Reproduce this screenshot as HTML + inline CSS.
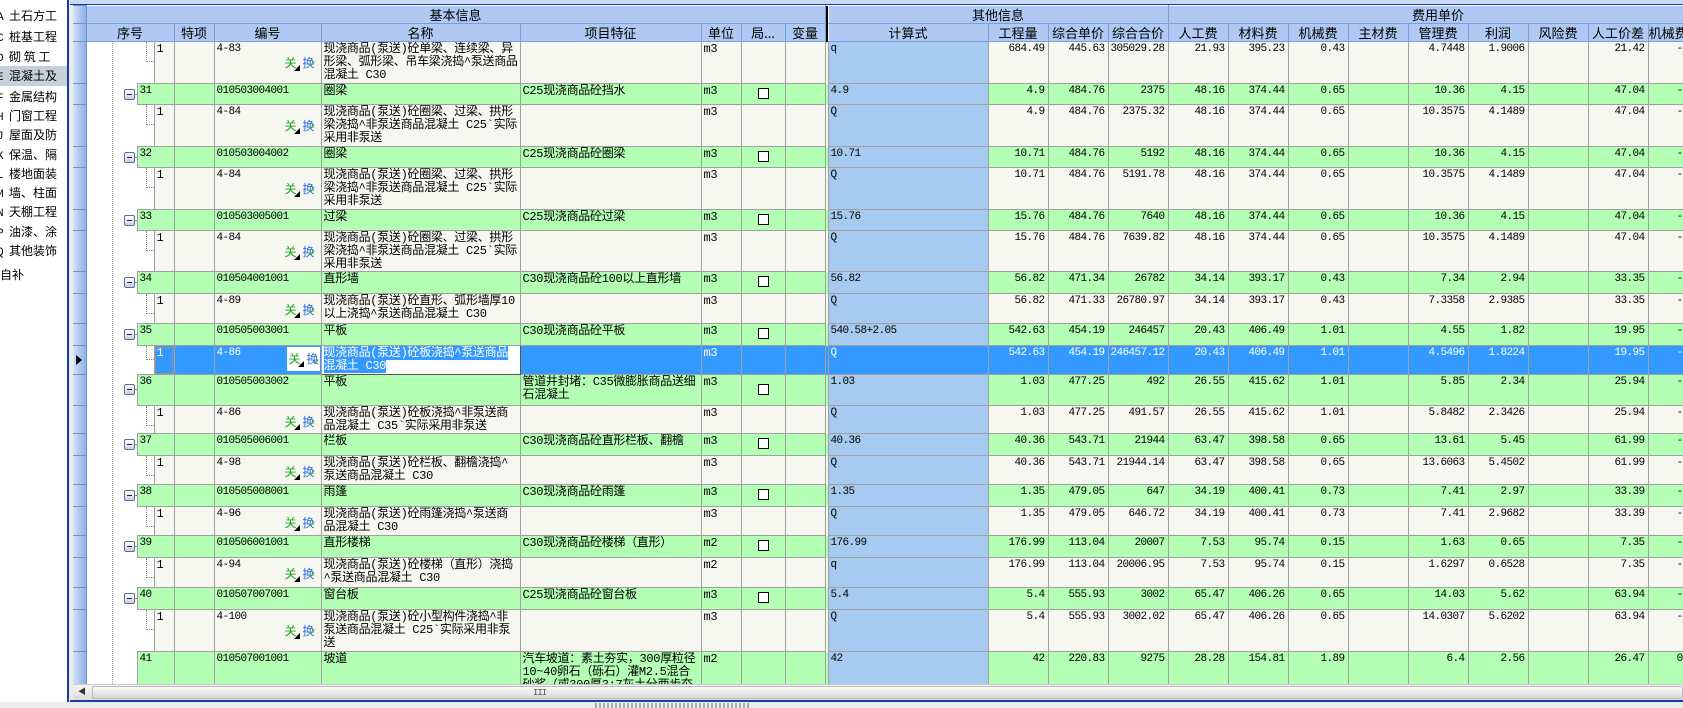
<!DOCTYPE html>
<html><head><meta charset="utf-8"><style>
*{box-sizing:border-box;margin:0;padding:0}
body{width:1683px;height:708px;overflow:hidden;background:#ececec;font:12px "Liberation Mono","WenQuanYi Zen Hei","Noto Sans CJK SC",monospace;color:#000;position:relative}
#left{position:absolute;left:0;top:0;width:69px;height:702px;background:#fff;border-right:2px solid #1a3c9e;overflow:hidden}
#left div{position:absolute;left:-3px;width:72px;height:19px;line-height:19px;font-size:12px;white-space:nowrap;font-family:"WenQuanYi Zen Hei","Noto Sans CJK SC",sans-serif}
#left div b{display:inline-block;width:12px;font-weight:normal;font-family:"Liberation Mono",monospace;font-size:11px}
#topbar{position:absolute;left:70px;top:0;width:1613px;height:5px;background:#c9dbf5;border-bottom:1px solid #1a3c9e}
#grid{position:absolute;left:73px;top:5px;width:1610px;height:679px;overflow:hidden;background:#fff}
table{border-collapse:collapse;table-layout:fixed;width:1635px}
td{border:1px solid #a0a0a0;padding:1px 1px 0 2px;vertical-align:top;overflow:hidden;line-height:13px;white-space:normal;word-break:break-all;letter-spacing:-0.3px}
thead td{background:#afc9f2;border:1px solid #fff;border-right:1px solid #7c9ddb;border-bottom:1px solid #7c9ddb;text-align:center;vertical-align:middle;font-family:"WenQuanYi Zen Hei","Noto Sans CJK SC",sans-serif;font-size:13px;padding:0;white-space:nowrap;letter-spacing:0}
td.rh{background:linear-gradient(90deg,#d6e4fa,#a9c3ee 60%,#8fb0e6);border:1px solid #6f91d4;border-left:0;padding:0;position:relative}
td.tk{background:#000;border:0;padding:0}
td.tr{border:0;background:#fff;position:relative;padding:0}
tr.g td{background:#b3ffb3}
tr.s td{background:#f7f7f2}
tr.g td.tr,tr.s td.tr{background:#fff}
td.c{background:#a6caf0!important;font-size:11px;letter-spacing:-0.6px}
td.r{text-align:right;padding-right:3px;font-size:11px;letter-spacing:-0.6px;white-space:nowrap}
td.l{padding-left:28px;font-size:11px;letter-spacing:-0.6px;white-space:nowrap}
td.n{font-size:11px;letter-spacing:-0.6px}
tr.sel td{background:#3399ff!important;color:#fff}
tr.sel td.tr{background:#fff!important}
tr.g td.rh,tr.s td.rh,tr.sel td.rh{background:linear-gradient(90deg,#d6e4fa,#a9c3ee 60%,#8fb0e6)!important}
.mb{position:absolute;left:37px;width:11px;height:11px;border:1px solid #5d6f8e;background:linear-gradient(#fff,#c7d2e4);border-radius:2px}
.mb:after{content:"";position:absolute;left:2px;top:4px;width:5px;height:1px;background:#223}
.ml{position:absolute;left:48px;width:4px;border-top:1px dotted #888}
.el{position:absolute;left:59px;top:0;width:8px;height:20px;border-left:1px dotted #888;border-bottom:1px dotted #888}
.ic{position:absolute;right:6px;font-family:"WenQuanYi Zen Hei","Noto Sans CJK SC",sans-serif;font-size:12px;line-height:13px;letter-spacing:0}
.ic i{font-style:normal;color:#1aa51a;position:relative;margin-right:6px}
.ic i:after{content:"";position:absolute;right:-4px;bottom:0;border:3px solid transparent;border-right-color:#000;border-bottom-color:#000}
.ic u{text-decoration:none;color:#2b6de0;position:relative}
.ic u:after{content:"✔";position:absolute;left:6px;top:3px;font-size:9px;color:#3bb33b}
td.bn{position:relative}
.cb{display:block;margin:3px auto 0;width:11px;height:11px;border:1px solid #000;background:#fff}
#vdot{position:absolute;left:112px;top:41px;height:643px;border-left:1px dotted #999}
#hs{position:absolute;left:73px;top:684px;width:1610px;height:16px;background:linear-gradient(#f4f4f4,#dcdcdc);border-top:1px solid #c8c8c8}
#hs .a{position:absolute;left:2px;top:2px;width:14px;height:12px;font-size:8px;line-height:12px;text-align:center;color:#333}
#hs .t{position:absolute;left:19px;top:1px;width:1591px;height:13px;background:linear-gradient(#fafafa,#d8d8d8);border:1px solid #bcbcbc;border-radius:2px}
#hs .t span{position:absolute;left:440px;top:1px;font-size:9px;color:#555;letter-spacing:-1px}
#bl{position:absolute;left:70px;top:700px;width:1613px;height:2px;background:#1a3c9e}
#dots{position:absolute;left:595px;top:703px;width:155px;height:5px;background:repeating-linear-gradient(90deg,#aaa 0 2px,transparent 2px 4px)}
</style></head><body>
<div id="left">
<div style="top:6px"><b>A</b>土石方工</div>
<div style="top:27px"><b>C</b>桩基工程</div>
<div style="top:47px"><b>D</b>砌 筑 工</div>
<div style="top:66px;background:#c6d0dc;height:20px"><b>E</b>混凝土及</div>
<div style="top:87px"><b>F</b>金属结构</div>
<div style="top:106px"><b>H</b>门窗工程</div>
<div style="top:125px"><b>J</b>屋面及防</div>
<div style="top:145px"><b>K</b>保温、隔</div>
<div style="top:164px"><b>L</b>楼地面装</div>
<div style="top:183px"><b>M</b>墙、柱面</div>
<div style="top:202px"><b>N</b>天棚工程</div>
<div style="top:222px"><b>P</b>油漆、涂</div>
<div style="top:241px"><b>Q</b>其他装饰</div>
<div style="top:265px;left:0">自补</div>
</div>
<div id="topbar"></div>
<div id="grid">
<table>
<colgroup><col style="width:13px"><col style="width:51px"><col style="width:17px"><col style="width:20px"><col style="width:40px"><col style="width:107px"><col style="width:199px"><col style="width:181px"><col style="width:40px"><col style="width:44px"><col style="width:40px"><col style="width:3px"><col style="width:160px"><col style="width:60px"><col style="width:60px"><col style="width:60px"><col style="width:60px"><col style="width:60px"><col style="width:60px"><col style="width:60px"><col style="width:60px"><col style="width:60px"><col style="width:60px"><col style="width:60px"><col style="width:60px"></colgroup>
<thead>
<tr style="height:18px"><td class="rh"></td><td colspan="10">基本信息</td><td class="tk"></td><td colspan="4">其他信息</td><td colspan="9">费用单价</td></tr>
<tr style="height:18px"><td class="rh"></td><td colspan="3">序号</td><td>特项</td><td>编号</td><td>名称</td><td>项目特征</td><td>单位</td><td>局...</td><td>变量</td><td class="tk"></td><td>计算式</td><td>工程量</td><td>综合单价</td><td>综合合价</td><td>人工费</td><td>材料费</td><td>机械费</td><td>主材费</td><td>管理费</td><td>利润</td><td>风险费</td><td>人工价差</td><td style="text-align:left">机械费</td></tr>
</thead>
<tbody>
<tr class="s" style="height:42px"><td class="rh"></td><td class="tr" colspan="2"><div class="el"></div></td><td>1</td><td></td><td class="bn n">4-83<span class="ic" style="top:14px"><i>关</i><u>换</u></span></td><td>现浇商品(泵送)砼单梁、连续梁、异形梁、弧形梁、吊车梁浇捣^泵送商品混凝土 C30</td><td></td><td>m3</td><td></td><td></td><td class="tk"></td><td class="c">q</td><td class="r">684.49</td><td class="r">445.63</td><td class="r">305029.28</td><td class="r">21.93</td><td class="r">395.23</td><td class="r">0.43</td><td></td><td class="r">4.7448</td><td class="r">1.9006</td><td></td><td class="r">21.42</td><td class="l">-0</td></tr>
<tr class="g" style="height:21px"><td class="rh"></td><td class="tr"><div class="mb" style="top:5px"></div><div class="ml" style="top:10px"></div></td><td colspan="2" class="n">31</td><td></td><td class="n">010503004001</td><td>圈梁</td><td>C25现浇商品砼挡水</td><td>m3</td><td><span class="cb"></span></td><td></td><td class="tk"></td><td class="c">4.9</td><td class="r">4.9</td><td class="r">484.76</td><td class="r">2375</td><td class="r">48.16</td><td class="r">374.44</td><td class="r">0.65</td><td></td><td class="r">10.36</td><td class="r">4.15</td><td></td><td class="r">47.04</td><td class="l">-0</td></tr>
<tr class="s" style="height:42px"><td class="rh"></td><td class="tr" colspan="2"><div class="el"></div></td><td>1</td><td></td><td class="bn n">4-84<span class="ic" style="top:14px"><i>关</i><u>换</u></span></td><td>现浇商品(泵送)砼圈梁、过梁、拱形梁浇捣^非泵送商品混凝土 C25`实际采用非泵送</td><td></td><td>m3</td><td></td><td></td><td class="tk"></td><td class="c">Q</td><td class="r">4.9</td><td class="r">484.76</td><td class="r">2375.32</td><td class="r">48.16</td><td class="r">374.44</td><td class="r">0.65</td><td></td><td class="r">10.3575</td><td class="r">4.1489</td><td></td><td class="r">47.04</td><td class="l">-0</td></tr>
<tr class="g" style="height:21px"><td class="rh"></td><td class="tr"><div class="mb" style="top:5px"></div><div class="ml" style="top:10px"></div></td><td colspan="2" class="n">32</td><td></td><td class="n">010503004002</td><td>圈梁</td><td>C25现浇商品砼圈梁</td><td>m3</td><td><span class="cb"></span></td><td></td><td class="tk"></td><td class="c">10.71</td><td class="r">10.71</td><td class="r">484.76</td><td class="r">5192</td><td class="r">48.16</td><td class="r">374.44</td><td class="r">0.65</td><td></td><td class="r">10.36</td><td class="r">4.15</td><td></td><td class="r">47.04</td><td class="l">-0</td></tr>
<tr class="s" style="height:42px"><td class="rh"></td><td class="tr" colspan="2"><div class="el"></div></td><td>1</td><td></td><td class="bn n">4-84<span class="ic" style="top:14px"><i>关</i><u>换</u></span></td><td>现浇商品(泵送)砼圈梁、过梁、拱形梁浇捣^非泵送商品混凝土 C25`实际采用非泵送</td><td></td><td>m3</td><td></td><td></td><td class="tk"></td><td class="c">Q</td><td class="r">10.71</td><td class="r">484.76</td><td class="r">5191.78</td><td class="r">48.16</td><td class="r">374.44</td><td class="r">0.65</td><td></td><td class="r">10.3575</td><td class="r">4.1489</td><td></td><td class="r">47.04</td><td class="l">-0</td></tr>
<tr class="g" style="height:21px"><td class="rh"></td><td class="tr"><div class="mb" style="top:5px"></div><div class="ml" style="top:10px"></div></td><td colspan="2" class="n">33</td><td></td><td class="n">010503005001</td><td>过梁</td><td>C25现浇商品砼过梁</td><td>m3</td><td><span class="cb"></span></td><td></td><td class="tk"></td><td class="c">15.76</td><td class="r">15.76</td><td class="r">484.76</td><td class="r">7640</td><td class="r">48.16</td><td class="r">374.44</td><td class="r">0.65</td><td></td><td class="r">10.36</td><td class="r">4.15</td><td></td><td class="r">47.04</td><td class="l">-0</td></tr>
<tr class="s" style="height:41px"><td class="rh"></td><td class="tr" colspan="2"><div class="el"></div></td><td>1</td><td></td><td class="bn n">4-84<span class="ic" style="top:14px"><i>关</i><u>换</u></span></td><td>现浇商品(泵送)砼圈梁、过梁、拱形梁浇捣^非泵送商品混凝土 C25`实际采用非泵送</td><td></td><td>m3</td><td></td><td></td><td class="tk"></td><td class="c">Q</td><td class="r">15.76</td><td class="r">484.76</td><td class="r">7639.82</td><td class="r">48.16</td><td class="r">374.44</td><td class="r">0.65</td><td></td><td class="r">10.3575</td><td class="r">4.1489</td><td></td><td class="r">47.04</td><td class="l">-0</td></tr>
<tr class="g" style="height:22px"><td class="rh"></td><td class="tr"><div class="mb" style="top:5px"></div><div class="ml" style="top:10px"></div></td><td colspan="2" class="n">34</td><td></td><td class="n">010504001001</td><td>直形墙</td><td>C30现浇商品砼100以上直形墙</td><td>m3</td><td><span class="cb"></span></td><td></td><td class="tk"></td><td class="c">56.82</td><td class="r">56.82</td><td class="r">471.34</td><td class="r">26782</td><td class="r">34.14</td><td class="r">393.17</td><td class="r">0.43</td><td></td><td class="r">7.34</td><td class="r">2.94</td><td></td><td class="r">33.35</td><td class="l">-0</td></tr>
<tr class="s" style="height:30px"><td class="rh"></td><td class="tr" colspan="2"><div class="el"></div></td><td>1</td><td></td><td class="bn n">4-89<span class="ic" style="top:9px"><i>关</i><u>换</u></span></td><td>现浇商品(泵送)砼直形、弧形墙厚10以上浇捣^泵送商品混凝土 C30</td><td></td><td>m3</td><td></td><td></td><td class="tk"></td><td class="c">Q</td><td class="r">56.82</td><td class="r">471.33</td><td class="r">26780.97</td><td class="r">34.14</td><td class="r">393.17</td><td class="r">0.43</td><td></td><td class="r">7.3358</td><td class="r">2.9385</td><td></td><td class="r">33.35</td><td class="l">-0</td></tr>
<tr class="g" style="height:22px"><td class="rh"></td><td class="tr"><div class="mb" style="top:5px"></div><div class="ml" style="top:10px"></div></td><td colspan="2" class="n">35</td><td></td><td class="n">010505003001</td><td>平板</td><td>C30现浇商品砼平板</td><td>m3</td><td><span class="cb"></span></td><td></td><td class="tk"></td><td class="c">540.58+2.05</td><td class="r">542.63</td><td class="r">454.19</td><td class="r">246457</td><td class="r">20.43</td><td class="r">406.49</td><td class="r">1.01</td><td></td><td class="r">4.55</td><td class="r">1.82</td><td></td><td class="r">19.95</td><td class="l">-0</td></tr>
<tr class="sel" style="height:29px"><td class="rh"><span style="position:absolute;left:3px;top:9px;border:5px solid transparent;border-left:6px solid #000"></span></td><td class="tr" colspan="2"><div class="el" style="height:14px"></div></td><td style="outline:1px dotted #f80;outline-offset:-2px">1</td><td></td><td class="bn n">4-86<span class="ic" style="top:1px;right:1px;background:#fff;padding:3px 1px;line-height:18px"><i>关</i><u>换</u></span></td><td style="background:#fff!important;border:1px solid #555"><span style="background:#3399ff;color:#fff">现浇商品(泵送)砼板浇捣^泵送商品混凝土 C30</span></td><td></td><td>m3</td><td></td><td></td><td class="tk"></td><td class="c">Q</td><td class="r">542.63</td><td class="r">454.19</td><td class="r">246457.12</td><td class="r">20.43</td><td class="r">406.49</td><td class="r">1.01</td><td></td><td class="r">4.5496</td><td class="r">1.8224</td><td></td><td class="r">19.95</td><td class="l">-0</td></tr>
<tr class="g" style="height:31px"><td class="rh"></td><td class="tr"><div class="mb" style="top:9px"></div><div class="ml" style="top:14px"></div></td><td colspan="2" class="n">36</td><td></td><td class="n">010505003002</td><td>平板</td><td>管道井封堵：C35微膨胀商品送细石混凝土</td><td>m3</td><td><span class="cb" style="margin-top:8px"></span></td><td></td><td class="tk"></td><td class="c">1.03</td><td class="r">1.03</td><td class="r">477.25</td><td class="r">492</td><td class="r">26.55</td><td class="r">415.62</td><td class="r">1.01</td><td></td><td class="r">5.85</td><td class="r">2.34</td><td></td><td class="r">25.94</td><td class="l">-0</td></tr>
<tr class="s" style="height:28px"><td class="rh"></td><td class="tr" colspan="2"><div class="el"></div></td><td>1</td><td></td><td class="bn n">4-86<span class="ic" style="top:9px"><i>关</i><u>换</u></span></td><td>现浇商品(泵送)砼板浇捣^非泵送商品混凝土 C35`实际采用非泵送</td><td></td><td>m3</td><td></td><td></td><td class="tk"></td><td class="c">Q</td><td class="r">1.03</td><td class="r">477.25</td><td class="r">491.57</td><td class="r">26.55</td><td class="r">415.62</td><td class="r">1.01</td><td></td><td class="r">5.8482</td><td class="r">2.3426</td><td></td><td class="r">25.94</td><td class="l">-0</td></tr>
<tr class="g" style="height:22px"><td class="rh"></td><td class="tr"><div class="mb" style="top:5px"></div><div class="ml" style="top:10px"></div></td><td colspan="2" class="n">37</td><td></td><td class="n">010505006001</td><td>栏板</td><td>C30现浇商品砼直形栏板、翻檐</td><td>m3</td><td><span class="cb"></span></td><td></td><td class="tk"></td><td class="c">40.36</td><td class="r">40.36</td><td class="r">543.71</td><td class="r">21944</td><td class="r">63.47</td><td class="r">398.58</td><td class="r">0.65</td><td></td><td class="r">13.61</td><td class="r">5.45</td><td></td><td class="r">61.99</td><td class="l">-0</td></tr>
<tr class="s" style="height:29px"><td class="rh"></td><td class="tr" colspan="2"><div class="el"></div></td><td>1</td><td></td><td class="bn n">4-98<span class="ic" style="top:9px"><i>关</i><u>换</u></span></td><td>现浇商品(泵送)砼栏板、翻檐浇捣^泵送商品混凝土 C30</td><td></td><td>m3</td><td></td><td></td><td class="tk"></td><td class="c">Q</td><td class="r">40.36</td><td class="r">543.71</td><td class="r">21944.14</td><td class="r">63.47</td><td class="r">398.58</td><td class="r">0.65</td><td></td><td class="r">13.6063</td><td class="r">5.4502</td><td></td><td class="r">61.99</td><td class="l">-0</td></tr>
<tr class="g" style="height:22px"><td class="rh"></td><td class="tr"><div class="mb" style="top:5px"></div><div class="ml" style="top:10px"></div></td><td colspan="2" class="n">38</td><td></td><td class="n">010505008001</td><td>雨篷</td><td>C30现浇商品砼雨篷</td><td>m3</td><td><span class="cb"></span></td><td></td><td class="tk"></td><td class="c">1.35</td><td class="r">1.35</td><td class="r">479.05</td><td class="r">647</td><td class="r">34.19</td><td class="r">400.41</td><td class="r">0.73</td><td></td><td class="r">7.41</td><td class="r">2.97</td><td></td><td class="r">33.39</td><td class="l">-0</td></tr>
<tr class="s" style="height:29px"><td class="rh"></td><td class="tr" colspan="2"><div class="el"></div></td><td>1</td><td></td><td class="bn n">4-96<span class="ic" style="top:9px"><i>关</i><u>换</u></span></td><td>现浇商品(泵送)砼雨篷浇捣^泵送商品混凝土 C30</td><td></td><td>m3</td><td></td><td></td><td class="tk"></td><td class="c">Q</td><td class="r">1.35</td><td class="r">479.05</td><td class="r">646.72</td><td class="r">34.19</td><td class="r">400.41</td><td class="r">0.73</td><td></td><td class="r">7.41</td><td class="r">2.9682</td><td></td><td class="r">33.39</td><td class="l">-0</td></tr>
<tr class="g" style="height:22px"><td class="rh"></td><td class="tr"><div class="mb" style="top:5px"></div><div class="ml" style="top:10px"></div></td><td colspan="2" class="n">39</td><td></td><td class="n">010506001001</td><td>直形楼梯</td><td>C30现浇商品砼楼梯（直形）</td><td>m2</td><td><span class="cb"></span></td><td></td><td class="tk"></td><td class="c">176.99</td><td class="r">176.99</td><td class="r">113.04</td><td class="r">20007</td><td class="r">7.53</td><td class="r">95.74</td><td class="r">0.15</td><td></td><td class="r">1.63</td><td class="r">0.65</td><td></td><td class="r">7.35</td><td class="l">-0</td></tr>
<tr class="s" style="height:30px"><td class="rh"></td><td class="tr" colspan="2"><div class="el"></div></td><td>1</td><td></td><td class="bn n">4-94<span class="ic" style="top:9px"><i>关</i><u>换</u></span></td><td>现浇商品(泵送)砼楼梯（直形）浇捣^泵送商品混凝土 C30</td><td></td><td>m2</td><td></td><td></td><td class="tk"></td><td class="c">q</td><td class="r">176.99</td><td class="r">113.04</td><td class="r">20006.95</td><td class="r">7.53</td><td class="r">95.74</td><td class="r">0.15</td><td></td><td class="r">1.6297</td><td class="r">0.6528</td><td></td><td class="r">7.35</td><td class="l">-0</td></tr>
<tr class="g" style="height:22px"><td class="rh"></td><td class="tr"><div class="mb" style="top:5px"></div><div class="ml" style="top:10px"></div></td><td colspan="2" class="n">40</td><td></td><td class="n">010507007001</td><td>窗台板</td><td>C25现浇商品砼窗台板</td><td>m3</td><td><span class="cb"></span></td><td></td><td class="tk"></td><td class="c">5.4</td><td class="r">5.4</td><td class="r">555.93</td><td class="r">3002</td><td class="r">65.47</td><td class="r">406.26</td><td class="r">0.65</td><td></td><td class="r">14.03</td><td class="r">5.62</td><td></td><td class="r">63.94</td><td class="l">-0</td></tr>
<tr class="s" style="height:42px"><td class="rh"></td><td class="tr" colspan="2"><div class="el"></div></td><td>1</td><td></td><td class="bn n">4-100<span class="ic" style="top:14px"><i>关</i><u>换</u></span></td><td>现浇商品(泵送)砼小型构件浇捣^非泵送商品混凝土 C25`实际采用非泵送</td><td></td><td>m3</td><td></td><td></td><td class="tk"></td><td class="c">Q</td><td class="r">5.4</td><td class="r">555.93</td><td class="r">3002.02</td><td class="r">65.47</td><td class="r">406.26</td><td class="r">0.65</td><td></td><td class="r">14.0307</td><td class="r">5.6202</td><td></td><td class="r">63.94</td><td class="l">-0</td></tr>
<tr class="g" style="height:45px"><td class="rh"></td><td class="tr"></td><td colspan="2" class="n">41</td><td></td><td class="n">010507001001</td><td>坡道</td><td>汽车坡道：素土夯实，300厚粒径10~40卵石（砾石）灌M2.5混合砂浆（或300厚3:7灰土分两步夯</td><td>m2</td><td></td><td></td><td class="tk"></td><td class="c">42</td><td class="r">42</td><td class="r">220.83</td><td class="r">9275</td><td class="r">28.28</td><td class="r">154.81</td><td class="r">1.89</td><td></td><td class="r">6.4</td><td class="r">2.56</td><td></td><td class="r">26.47</td><td class="l">0</td></tr>
</tbody></table>
</div>
<div id="vdot"></div>
<div id="hs"><div class="a">◀</div><div class="t"><span>III</span></div></div>
<div id="bl"></div>
<div id="dots"></div>
</body></html>
